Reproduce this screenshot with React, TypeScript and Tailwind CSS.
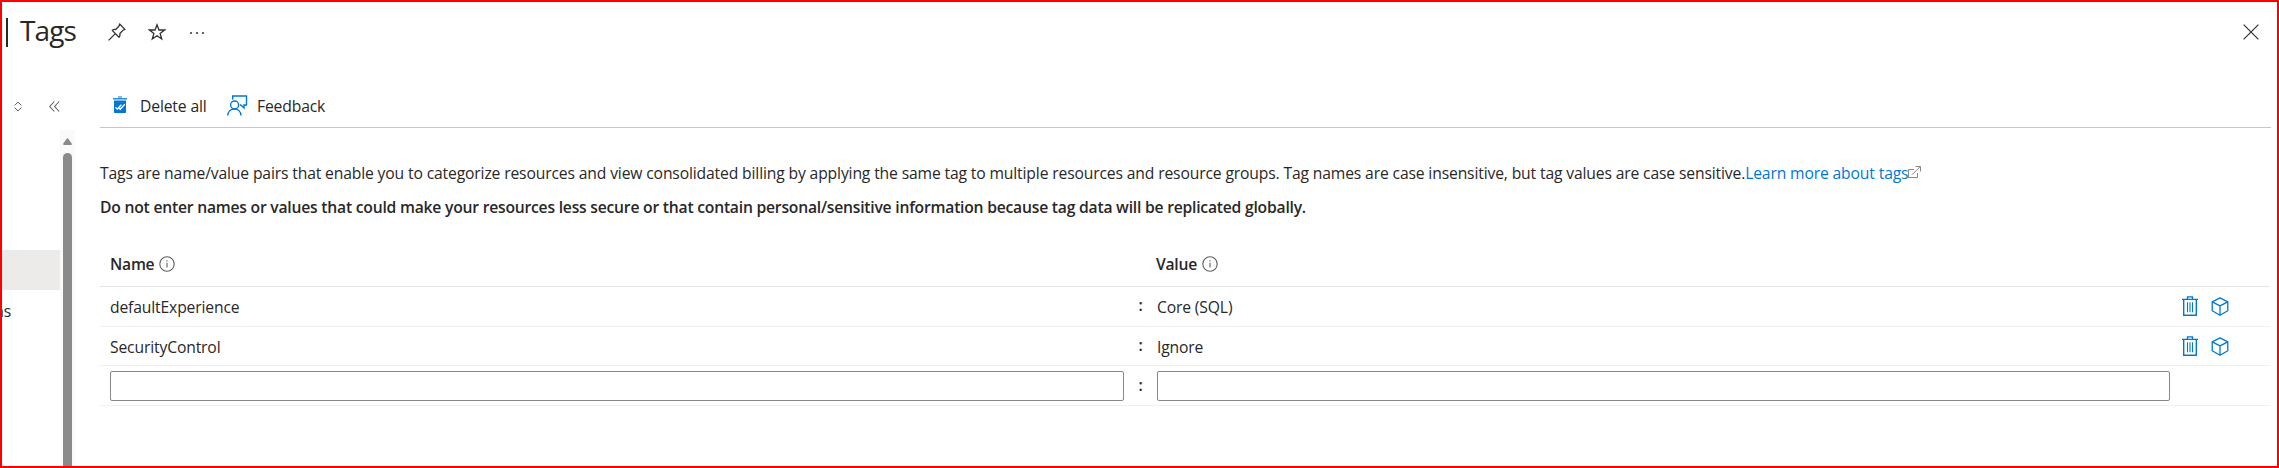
import type { ReactNode } from "react";

const BLUE = "#0078d4";

function PinIcon() {
  return (
    <svg width="18" height="18" viewBox="0 0 18 18" fill="none" stroke="#323130" strokeWidth="1.3" strokeLinejoin="round">
      <path d="M11.600 1 17 6.400l-1.600.5-3.500 3.600c.3 1.500 0 2.700-.9 3.700L4.200 7.400c1-.9 2.300-1.200 3.600-.9l3.400-3.700zM7.400 10.600.6 17.400" />
    </svg>
  );
}

function StarIcon() {
  return (
    <svg width="18" height="18" viewBox="0 0 18 18" fill="none" stroke="#323130" strokeWidth="1.300">
      <path d="m9 1.800 2 5.200h5.500l-4.400 3.500 1.600 5.500L9 12.700 4.300 16l1.600-5.500L1.500 7H7z" />
    </svg>
  );
}

function CloseIcon() {
  return (
    <svg width="16" height="16" viewBox="0 0 16 16" fill="none" stroke="#323130" strokeWidth="1.200">
      <path d="m.6.600 14.800 14.800M15.400.6.600 15.400" />
    </svg>
  );
}

function DeleteAllIcon() {
  return (
    <svg width="14" height="18" viewBox="0 0 14 18" fill="none">
      <path d="M5 1h4" stroke="#5ea0dd" strokeWidth="1.500" />
      <path d="M0 2h14v1.500H0z" fill="#2b8ad9" />
      <path d="M1 4.500h12v11.700q0 .8-.8.8H1.800q-.8 0-.8-.8z" fill={BLUE} />
      <path d="m2.500 11.300 1.800 1.800 4-4.400M6 12l1.200 1.200 4.600-5" stroke="#fff" strokeWidth="1.300" />
    </svg>
  );
}

function FeedbackIcon() {
  return (
    <svg width="21" height="21" viewBox="0 0 21 21" fill="none" stroke={BLUE} strokeWidth="1.400">
      <path d="M5.700 4.500V1h13.800v9h-2.500v3l-3.200-3h-1" />
      <circle cx="7.600" cy="10" r="4" />
      <path d="M.8 20.500c.2-4 3-6.500 6.600-6.500s6.400 2.500 6.600 6.500" />
    </svg>
  );
}

function InfoIcon() {
  return (
    <svg width="16" height="16" viewBox="0 0 16 16" fill="none" stroke="#605e5c">
      <circle cx="8" cy="8" r="7.200" strokeWidth="1.100" />
      <path d="M8 6.800v4.700M8 4.300v1.300" strokeWidth="1.100" />
    </svg>
  );
}

function ExternalIcon() {
  return (
    <svg width="13" height="13" viewBox="0 0 13 13" fill="none" stroke="#8a8886" strokeWidth="1">
      <path d="M6 3.500H.5v8h9V7M4 8.800 12 .8M7.500.5h5v5" />
    </svg>
  );
}

function TrashIcon() {
  return (
    <svg width="16" height="20" viewBox="0 0 16 20" fill="none" stroke={BLUE}>
      <path d="M5.500 3V.8h5V3M0 3.300h16" strokeWidth="1.300" />
      <path d="M1.700 3.500v15.700h12.600V3.500" strokeWidth="1.400" />
      <path d="M5.500 6.300v10M8 6.300v10M10.500 6.300v10" strokeWidth="1.100" />
    </svg>
  );
}

function CubeIcon() {
  return (
    <svg width="18" height="19" viewBox="0 0 18 19" fill="none" stroke={BLUE} strokeWidth="1.300" strokeLinejoin="round">
      <path d="M9 .8 16.800 4.800v9L9 18.200l-7.800-4.400v-9zM1.200 4.800 9 8.800l7.800-4M9 8.800v9.400" />
    </svg>
  );
}

function ColumnTitle({ children, className }: { children: ReactNode; className: string }) {
  return <div className={"flex items-center font-semibold tracking-[-0.25px] " + className}>{children}</div>;
}

const tags = [
  { name: "defaultExperience", value: "Core (SQL)", row: "h-10 pb-px" },
  { name: "SecurityControl", value: "Ignore", row: "h-[39px]" },
];

function Sidebar() {
  return (
    <aside className="flex w-[73px] shrink-0">
      <div className="w-[58px] shrink-0 overflow-hidden">
        <div className="flex h-[62px] items-center pl-3 pt-[24px]">
          <svg width="9" height="11" viewBox="0 0 9 11" fill="none" stroke="#605e5c" strokeWidth="1.100">
            <path d="m.6 4.200 3.900-3.600 3.900 3.600M.6 6.800l3.900 3.600 3.900-3.600" />
          </svg>
          <svg className="ml-[27px] shrink-0" width="11" height="11" viewBox="0 0 11 11" fill="none" stroke="#605e5c" strokeWidth="1.100">
            <path d="M5.300.5.700 5.500l4.600 5M10.200.5 5.600 5.500l4.600 5" />
          </svg>
        </div>
        <div className="mt-[125px] h-10 bg-[#edebe9]" />
        <div className="mt-[11px] flex h-5 w-[9px] justify-end leading-5">ns</div>
      </div>
      <div className="mt-[67px] flex flex-1 flex-col bg-[#fafafa] pl-[3px] pt-2">
        <svg width="9" height="7" viewBox="0 0 9 7" fill="#8a8a8a">
          <path d="M3.700.7q.8-1 1.600 0L8.700 5.500Q9.200 7 8 7H1Q-.2 7 .3 5.500z" />
        </svg>
        <div className="mt-2 w-[9px] flex-1 rounded-t-full bg-[#8a8a8a]" />
      </div>
    </aside>
  );
}

export default function App() {
  return (
    <div className="flex h-[468px] w-[2279px] flex-col overflow-hidden border-2 border-[#ff0000] bg-white font-['Open_Sans','Noto_Sans',sans-serif] text-[15.7px] leading-5 tracking-[-0.15px] text-[#292827]">
      <header className="flex h-[61px] shrink-0 items-start pl-1 pr-[18px]">
        <div className="mt-4 h-[29px] w-[2px] bg-[#292827]" />
        <h1 className="ml-[12px] mt-[8px] w-[57px] whitespace-nowrap text-[28px] leading-[40px] tracking-[-0.9px]">Tags</h1>
        <span className="ml-[31px] mt-[21px]"><PinIcon /></span>
        <span className="ml-[22px] mt-[21px]"><StarIcon /></span>
        <div className="ml-[24px] mt-[30px] flex gap-[4px]">
          <i className="size-[2px] rounded-full bg-[#323130]" />
          <i className="size-[2px] rounded-full bg-[#323130]" />
          <i className="size-[2px] rounded-full bg-[#323130]" />
        </div>
        <span className="ml-auto mt-[22px]"><CloseIcon /></span>
      </header>
      <div className="flex min-h-0 flex-1">
        <Sidebar />
        <main className="ml-[25px] w-[2171px]">
          <div className="flex h-[65px] items-start border-b border-[#c8c6c4] pl-[13px]">
            <span className="mt-[33px]"><DeleteAllIcon /></span>
            <span className="ml-[13px] mt-[33px] w-[67px] whitespace-nowrap">Delete all</span>
            <span className="ml-[20px] mt-[32px]"><FeedbackIcon /></span>
            <span className="ml-[9px] mt-[33px] whitespace-nowrap">Feedback</span>
          </div>
          <div className="mt-[35px] flex h-5 items-start whitespace-nowrap">
            <span>Tags are name/value pairs that enable you to categorize resources and view consolidated billing by applying the same tag to multiple resources and resource groups. Tag names are case insensitive, but tag values are case sensitive.</span>
            <a className="text-[#0078d4]">Learn more about tags</a>
            <span className="mt-[3px]"><ExternalIcon /></span>
          </div>
          <p className="mt-[14px] whitespace-nowrap font-semibold tracking-[-0.225px]">Do not enter names or values that could make your resources less secure or that contain personal/sensitive information because tag data will be replicated globally.</p>
          <section className="mt-[24px] w-[2170px]">
            <div className="flex h-[46px] items-center border-b border-[#e5e5e5] pl-[10px] pt-px">
              <ColumnTitle className="w-[1047px]"><span className="mr-[5px]">Name</span><InfoIcon /></ColumnTitle>
              <ColumnTitle className="-ml-px"><span className="mr-[5px]">Value</span><InfoIcon /></ColumnTitle>
            </div>
            {tags.map((t) => (
              <div key={t.name} className={"flex items-center border-b border-[#f0f0f0] pl-[10px] " + t.row}>
                <span className="w-[1014px] pt-[2px]">{t.name}</span>
                <span className="w-[33px] pb-[3px] text-center font-semibold">:</span>
                <span className="w-[1025px] pt-[2px]">{t.value}</span>
                <TrashIcon />
                <span className="ml-[13px]"><CubeIcon /></span>
              </div>
            ))}
            <div className="flex h-10 items-center border-b border-[#f0f0f0] pl-[10px]">
              <input className="h-[30px] w-[1014px] rounded-[2px] border border-[#8a8886]" />
              <span className="w-[33px] pb-[2px] text-center font-semibold">:</span>
              <input className="h-[30px] w-[1013px] rounded-[2px] border border-[#8a8886]" />
            </div>
          </section>
        </main>
      </div>
    </div>
  );
}
